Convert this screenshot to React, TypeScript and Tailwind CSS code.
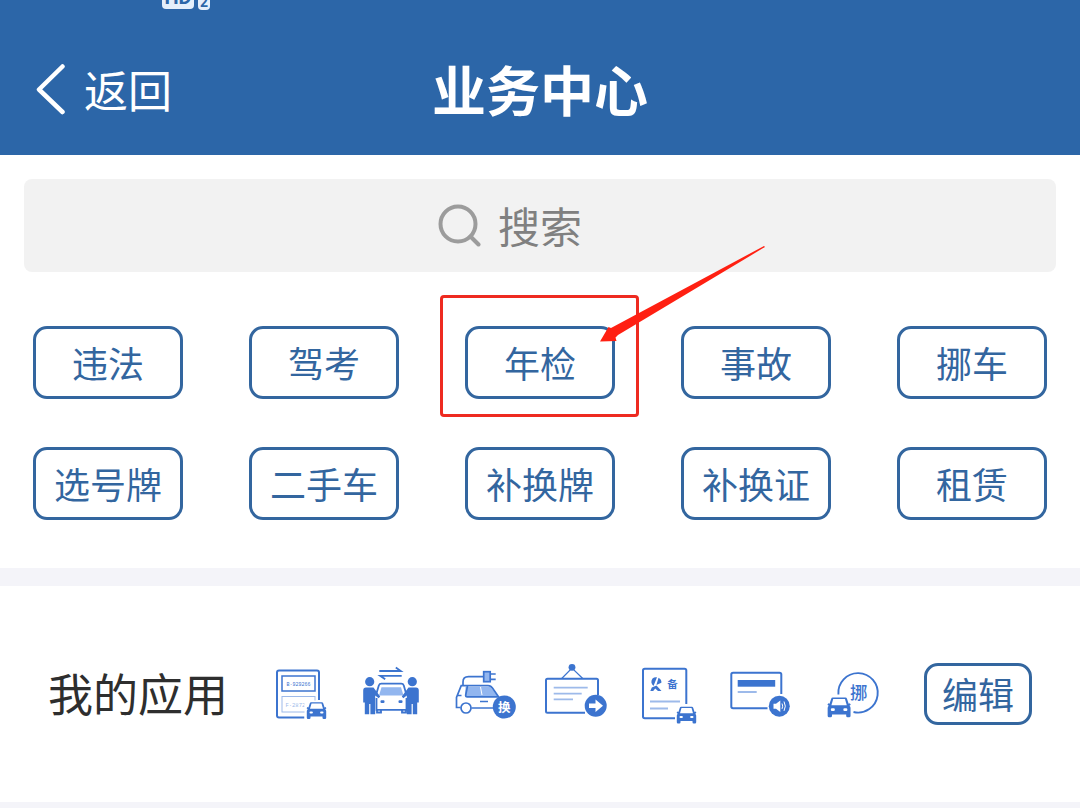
import React from 'react';

const services = ['违法', '驾考', '年检', '事故', '挪车', '选号牌', '二手车', '补换牌', '补换证', '租赁'];

const BLUE = '#3c74cf';
const LIGHT = '#9dbaea';

interface AppIconProps {
  label: string;
  children: React.ReactNode;
}

const AppIcon: React.FC<AppIconProps> = ({ label, children }) => (
  <a href="#" aria-label={label} className="block">
    <svg className="h-16 w-16" viewBox="0 0 64 64" fill="none" stroke={BLUE} strokeWidth="2" overflow="visible">
      {children}
    </svg>
  </a>
);

// Small front-facing car, 20 x 17 units
const Car: React.FC<{ x: number; y: number; scale?: number }> = ({ x, y, scale = 1 }) => (
  <g transform={`translate(${x} ${y}) scale(${scale})`} stroke="none" fill={BLUE}>
    <path d="M4.600 0.400h10.800q1 0 1.300 1l1.400 4.300 1-.5 .8 1.300-1.100 .9q.9 .8 .9 2v6.500q0 1.300-1.200 1.300h-1.300q-1.200 0-1.200-1.300v-1.100H4v1.100q0 1.300-1.200 1.300H1.500Q.3 17.200 .3 15.900V9.400q0-1.200 .9-2L.1 6.500l.8-1.300 1 .5 1.400-4.300q.3-1 1.300-1z" />
    <path d="M5 1.800h10l1.500 5.200h-13z" fill="#fff" />
    <rect x="3" y="9.600" width="3.400" height="2.200" rx="1" fill="#fff" />
    <rect x="13.600" y="9.600" width="3.400" height="2.200" rx="1" fill="#fff" />
  </g>
);

const MyApps: React.FC = () => (
  <div className="flex items-center gap-7">
    <AppIcon label="临时号牌">
      <path d="M51 38V10.500q0-2-2-2H11q-2 0-2 2v43q0 2 2 2h25.500" />
      <rect x="14" y="14" width="33" height="15" strokeWidth="1.500" />
      <rect x="14" y="34.500" width="33" height="15.500" strokeWidth="1" stroke={LIGHT} />
      <text x="30.500" y="23.500" fontSize="5" fontFamily="Liberation Mono" textAnchor="middle" fill={BLUE} stroke="none">B·929266</text>
      <text x="29" y="44.500" fontSize="5.500" fontFamily="Liberation Mono" textAnchor="middle" fill={LIGHT} stroke="none">F·28725</text>
      <rect x="36.500" y="38.500" width="24" height="20" fill="#fff" stroke="none" />
      <Car x={38.500} y={39.800} />
    </AppIcon>
    <AppIcon label="车辆过户">
      <g strokeWidth="1.800">
        <path d="M19.300 9h21.500l-5-3.500M41.700 13.800H20.200l5 3.500" />
        <path d="M16 33l2.800-9.500q.7-1.800 2.500-1.800h20q1.800 0 2.500 1.800L46.500 33" />
        <path d="M16.500 36v11.800h30V36M17 47v3.500h4v-2.500M46 47v3.500h-4v-2.500" />
      </g>
      <path d="M21.500 25.200h19.500l2.500 8.300h-24.500z" fill="#92b6ef" stroke="none" />
      <g fill={BLUE} stroke="none">
        <rect x="20.500" y="38.300" width="4" height="2.600" rx="1" />
        <rect x="38.500" y="38.300" width="4" height="2.600" rx="1" />
        <circle cx="9.700" cy="19.700" r="4.600" />
        <circle cx="52.300" cy="19.700" r="4.600" />
        <path d="M6 25.500h7.500l6.700 9-1.500 1.800-3.500-2.700v18.600H10.400V42H9.200v10.200H4.800V40.500H3.200V28.500q0-3 2.800-3z" />
        <path d="M56 25.500h-7.500l-6.700 9 1.500 1.800 3.500-2.700v18.600h4.800V42h1.200v10.200h4.400V40.500h1.600V28.500q0-3-2.800-3z" />
      </g>
    </AppIcon>
    <AppIcon label="新能源换牌">
      <path d="M13.500 25h25l8 10H15q-2 0-1.700-2z" fill="#92b6ef" stroke="none" />
      <path d="M28.500 25l1.500 8" stroke="#fff" strokeWidth="1" />
      <g strokeWidth="1.700">
        <path d="M11 24v-4q0-5.300 5.500-5.300h15" />
        <rect x="31.700" y="9.700" width="6.500" height="10" fill="#92b6ef" />
        <path d="M38.500 12h5.200M38.500 17.300h5.200" />
        <path d="M47 35.500l-5.500-8q-2.200-3.800-5.500-3.800H9.200L4.500 35.500v10h4M19.500 46h22M15.500 24l-1.800 9q-.3 1.800 1.500 1.800h31.500M5 33.500h4.500M28 39.500h8" />
        <circle cx="14" cy="46" r="5" />
      </g>
      <circle cx="52.300" cy="45" r="11.500" fill={BLUE} stroke="none" />
      <text x="52.300" y="49.500" fontSize="12.500" fontWeight="bold" textAnchor="middle" fill="#fff" stroke="none">换</text>
    </AppIcon>
    <AppIcon label="转出业务">
      <path d="M54 33V18.200q0-1.500-1.500-1.500h-49Q2 16.700 2 18.200v31q0 1.500 1.500 1.500H41" />
      <path d="M17.700 16.500L28 6l10.700 10.500" strokeWidth="1.200" />
      <circle cx="28" cy="5.300" r="3.400" fill={BLUE} stroke="none" />
      <path d="M9.700 25.700h34M9.700 31.700h28M9.700 37.400H29" stroke={LIGHT} strokeWidth="1.700" />
      <circle cx="51.700" cy="43.700" r="11" fill={BLUE} stroke="none" />
      <path d="M45 41.500h6.500v-4l7.500 6.200-7.500 6.200v-4H45z" fill="#fff" stroke="none" />
    </AppIcon>
    <AppIcon label="备案业务">
      <path d="M50.300 42V8.500q0-1.800-1.800-1.800H8.800Q7 6.700 7 8.500v46q0 1.800 1.800 1.800H39" />
      <path d="M16.500 16.500q2-1.700 4.500-1.200l-3.500 8.700q-3.700-3.500-1-7.500zM22.500 15.800q3.200 1.500 2.900 5l-5 2.200zM15.800 25.500l4.700-2 5 5.500h-3.500l-2.800-2.500-2 2.500h-2.900z" fill={BLUE} stroke="none" />
      <text x="36.500" y="26" fontSize="10.500" fontWeight="bold" textAnchor="middle" fill={BLUE} stroke="none">备</text>
      <path d="M14 39.400h30M14 46.400h18" stroke={LIGHT} strokeWidth="2" />
      <Car x={40.500} y={44.300} />
    </AppIcon>
    <AppIcon label="证件公告">
      <path d="M53.300 32V12.500q0-1.800-1.800-1.800H5.100q-1.800 0-1.800 1.800v32q0 1.800 1.800 1.800H39.500" />
      <rect x="9.700" y="18" width="37.500" height="6.700" fill={BLUE} stroke="none" />
      <path d="M9.700 30h19" stroke={LIGHT} strokeWidth="2" />
      <circle cx="51.300" cy="44.200" r="10.500" fill={BLUE} stroke="none" />
      <path d="M45.500 41.700h2.500l4.300-3.200v11.400L48 46.700h-2.500z" fill="#fff" stroke="none" />
      <path d="M54 41.500q1.400 2.700 0 5.400M56 39.500q2.600 4.700 0 9.400" stroke="#fff" strokeWidth="1" />
    </AppIcon>
    <AppIcon label="一键挪车">
      <path d="M18.400 32.500A19.700 19.700 0 1 1 33.500 50" strokeWidth="1.900" />
      <text x="38.700" y="37" fontSize="17.500" fontWeight="500" textAnchor="middle" fill={BLUE} stroke="none">挪</text>
      <Car x={7.300} y={35} scale={1.180} />
    </AppIcon>
  </div>
);

// Red frame and arrow that point out one of the services
const Highlight: React.FC = () => (
  <svg className="pointer-events-none absolute -left-[25px] -top-20 h-[172px] w-[326px]" viewBox="0 0 326 172" fill="none" aria-hidden="true">
    <rect x="1.500" y="50.500" width="196" height="119" rx="2.500" stroke="#ee2a20" strokeWidth="3" />
    <path d="M160 95.500l8.500-14.500 2.500 1L324 0l1 1L178 89l-2.500 2.500 1 3.500z" fill="#ff2012" />
  </svg>
);

const App: React.FC = () => {
  return (
    <div className="bg-white font-['Noto_Sans_CJK_SC',sans-serif]">
      <header className="bg-[#2c66a8] text-white">
        <div className="flex h-2.5 items-end gap-1 overflow-hidden pl-[162px] font-['Roboto','Noto_Sans_CJK_SC',sans-serif] font-bold text-[#2c66a8]">
          <span className="mb-px flex h-6 w-8 items-end justify-center rounded bg-[#e4effb] text-xl leading-6">HD</span>
          <span className="flex h-4 w-3 items-end justify-center rounded-sm bg-[#e4effb] text-sm leading-4">2</span>
        </div>
        <div className="grid grid-cols-[1fr_auto_1fr] items-center px-9 pb-[26px] pt-[38px]">
          <button className="flex items-center gap-4 justify-self-start text-[44px] leading-[80px]">
            <svg className="h-[52px] w-8" viewBox="0 0 32 52" fill="none" stroke="#fff" strokeWidth="4.500" strokeLinecap="round" strokeLinejoin="round">
              <path d="M26.500 3.500L3 26.500l23.500 22.500" />
            </svg>
            返回
          </button>
          <h1 className="text-[54px] font-bold leading-[81px]">业务中心</h1>
        </div>
      </header>

      <main>
        <div className="px-6 pt-6">
          <label className="flex h-[93px] items-center justify-center gap-4 rounded-lg bg-[#f2f2f2] pb-0.5">
            <svg className="h-11 w-11" viewBox="0 0 44 44" fill="none" stroke="#9c9c9c" strokeWidth="4" strokeLinecap="round">
              <circle cx="20" cy="21" r="17.500" />
              <path d="M32.500 33.500l8 8" />
            </svg>
            <input type="text" aria-label="搜索" placeholder="搜索" className="w-36 bg-transparent text-[42px] leading-[60px] text-[#808080] outline-none placeholder:text-[#808080]" />
          </label>
        </div>

        <div className="grid grid-cols-5 justify-items-center gap-y-12 pb-12 pt-[54px]">
          {services.map((name) => (
            <div key={name} className="relative">
              <button className="h-[73px] w-[150px] rounded-[14px] border-3 border-[#33669f] pb-0.5 text-4xl text-[#33669f]">{name}</button>
              {name === '年检' && <Highlight />}
            </div>
          ))}
        </div>

        <section className="flex items-center justify-between border-b-6 border-t-18 border-[#f4f4f9] px-12 py-[76px]">
          <h2 className="pb-0.5 text-[45px] leading-[60px] text-[#2e2e2e]">我的应用</h2>
          <MyApps />
          <button className="h-[62px] w-[108px] rounded-[14px] border-3 border-[#33669f] pb-0.5 text-4xl text-[#33669f]">编辑</button>
        </section>
      </main>
    </div>
  );
};

export default App;
